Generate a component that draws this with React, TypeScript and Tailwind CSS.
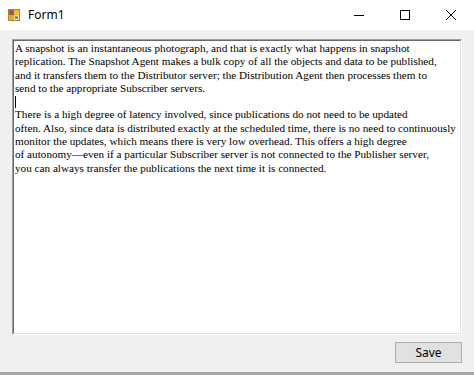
import React from "react";

const para1 = [
  "A snapshot is an instantaneous photograph, and that is exactly what happens in snapshot",
  "replication. The Snapshot Agent makes a bulk copy of all the objects and data to be published,",
  "and it transfers them to the Distributor server; the Distribution Agent then processes them to",
  "send to the appropriate Subscriber servers.",
];
const para2 = [
  "There is a high degree of latency involved, since publications do not need to be updated",
  "often. Also, since data is distributed exactly at the scheduled time, there is no need to continuously",
  "monitor the updates, which means there is very low overhead. This offers a high degree",
  "of autonomy\u2014even if a particular Subscriber server is not connected to the Publisher server,",
  "you can always transfer the publications the next time it is connected.",
];

function FormIcon() {
  return (
    <svg width="12" height="12" viewBox="0 0 12 12">
      <rect x="0.5" y="0.5" width="11" height="11" fill="#f4c542" stroke="#b08a2a" strokeWidth="1" />
      <rect x="1" y="1" width="5" height="5" fill="#d9452b" />
      <rect x="6" y="1" width="5" height="5" fill="#f2b830" />
      <rect x="1" y="6" width="5" height="5" fill="#e8a33a" />
      <rect x="6" y="6" width="5" height="5" fill="#fbe27a" />
      <rect x="2" y="2.5" width="3" height="2" fill="#3a6fc4" />
      <rect x="7" y="7.5" width="3" height="2" fill="#3a6fc4" />
    </svg>
  );
}

export default function App() {
  return (
    <div className="w-[474px] h-[375px] flex flex-col bg-[#f0f0f0] overflow-hidden">
      {/* Title bar */}
      <div className="h-[30px] bg-white flex items-center shrink-0">
        <div className="ml-[8px] flex items-center">
          <FormIcon />
        </div>
        <span className="ml-[8px] text-[12px] text-black font-['Segoe_UI','Noto_Sans',sans-serif] leading-none">
          Form1
        </span>
        <div className="ml-auto flex h-full">
          <div className="w-[46px] h-full flex items-center justify-center">
            <svg width="10" height="10" viewBox="0 0 10 10">
              <line x1="0" y1="5.5" x2="10" y2="5.5" stroke="#000" strokeWidth="1" />
            </svg>
          </div>
          <div className="w-[46px] h-full flex items-center justify-center">
            <svg width="10" height="10" viewBox="0 0 10 10">
              <rect x="0.5" y="0.5" width="9" height="9" fill="none" stroke="#000" strokeWidth="1" />
            </svg>
          </div>
          <div className="w-[46px] h-full flex items-center justify-center">
            <svg width="10" height="10" viewBox="0 0 10 10">
              <path d="M0 0 L10 10 M10 0 L0 10" stroke="#000" strokeWidth="1" />
            </svg>
          </div>
        </div>
      </div>

      {/* Body */}
      <div className="flex-1 flex flex-col pl-[12px] pr-[12px] pt-[9px] border-b-[3px] border-[#a8a8a8]">
        <div className="h-[296px] border-t border-l border-[#a0a0a0] border-r border-b border-r-white border-b-white">
          <div className="h-full border-t border-l border-[#696969] border-r border-b border-r-[#e3e3e3] border-b-[#e3e3e3] bg-white px-[1px] pt-[1px] font-['Liberation_Serif','Times_New_Roman',serif] text-[11.2px] leading-[13.3px] text-black">
            {para1.map((l) => (
              <div key={l} className="whitespace-nowrap">{l}</div>
            ))}
            <div className="h-[13.3px] flex items-center">
              <div className="w-px h-[12px] bg-black" />
            </div>
            {para2.map((l) => (
              <div key={l} className="whitespace-nowrap">{l}</div>
            ))}
          </div>
        </div>
        <div className="flex justify-end mt-[7px]">
          <button className="w-[67px] h-[21px] bg-[#e1e1e1] border border-[#adadad] text-[12px] text-black font-['Segoe_UI','Noto_Sans',sans-serif] leading-none">
            Save
          </button>
        </div>
      </div>
    </div>
  );
}
